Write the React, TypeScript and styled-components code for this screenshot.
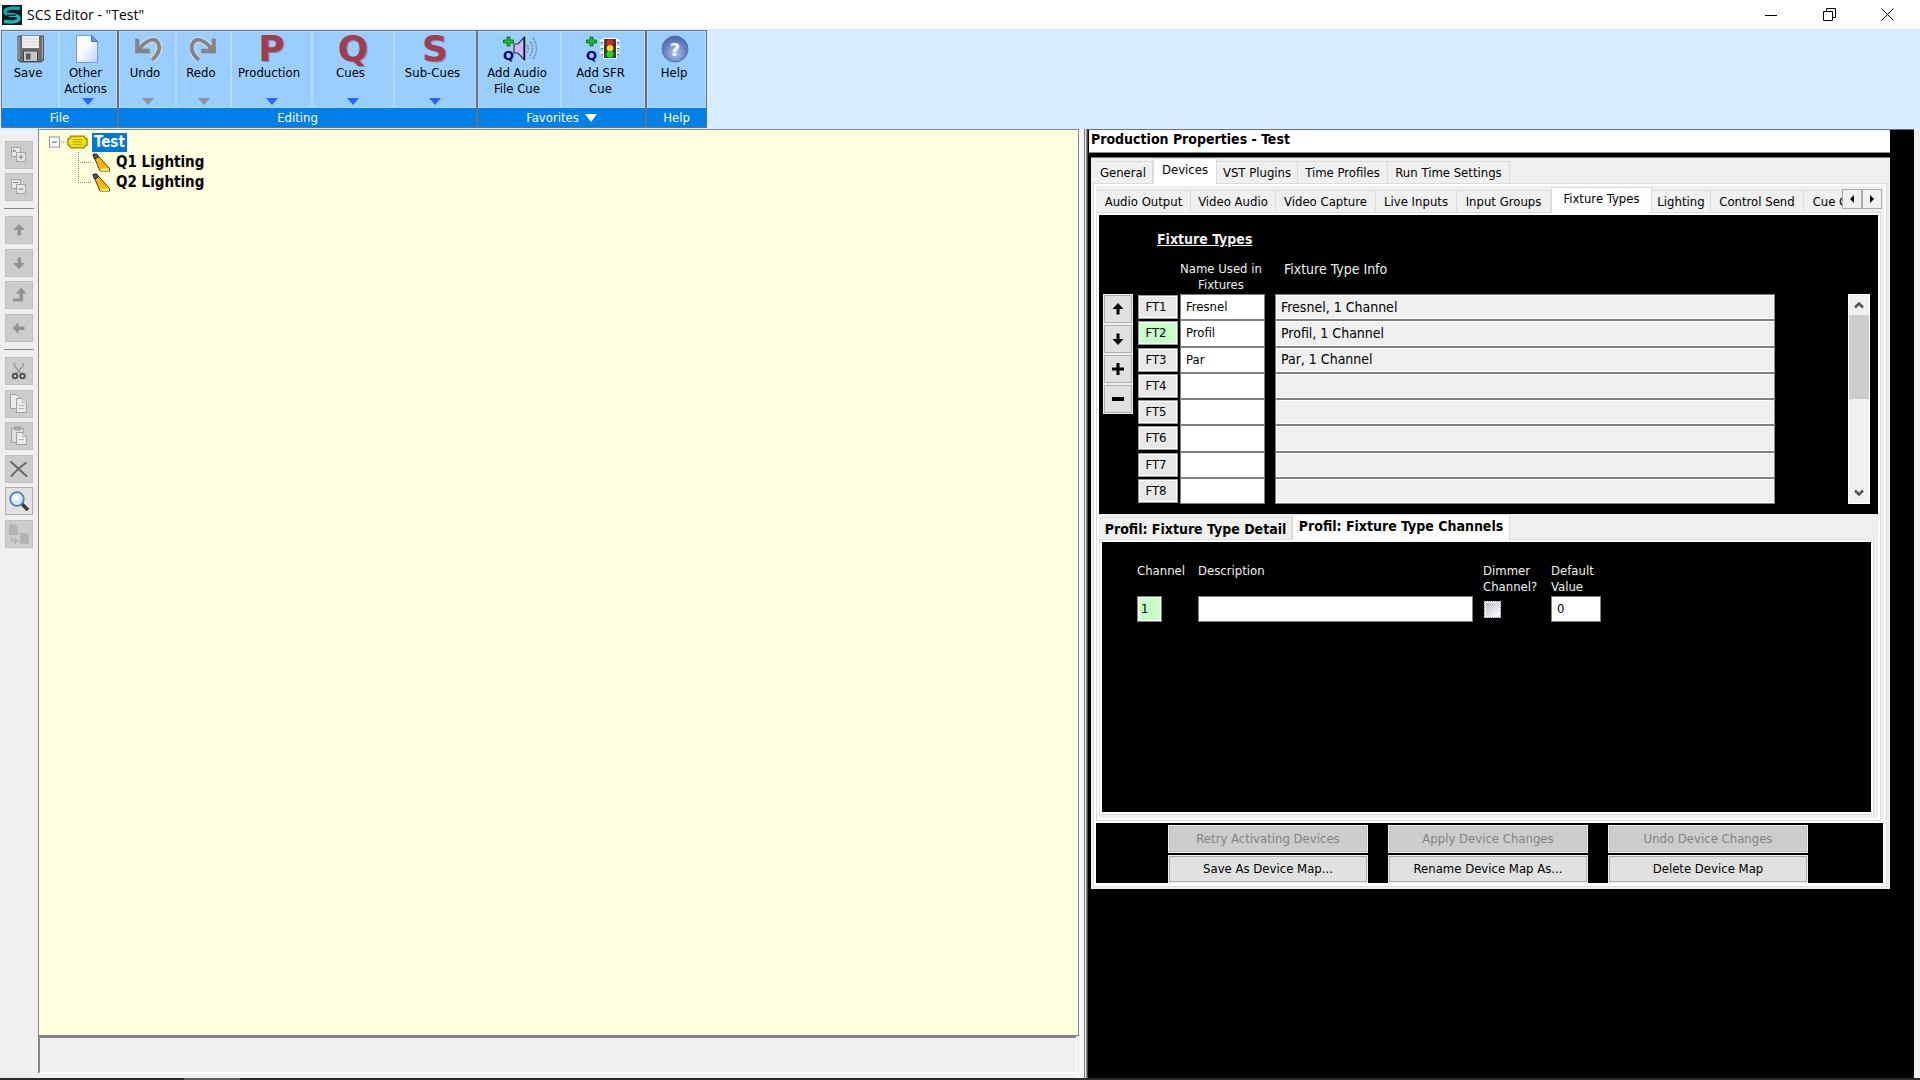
import React from 'react';
import styled, { createGlobalStyle, css } from 'styled-components';

const UI_FONT = '"DejaVu Sans Condensed", "DejaVu Sans", "Liberation Sans", sans-serif';

const GlobalStyle = createGlobalStyle`
  * { box-sizing: border-box; }
  body { margin: 0; background: #f0f0f0; }
  button, input { font: inherit; color: inherit; }
`;

/* ---------- window ---------- */

const Window = styled.div`
  display: flex;
  flex-direction: column;
  height: 100vh;
  overflow: hidden;
  background: #efefef;
  color: #000;
  font: 13px/16px ${UI_FONT};
`;

const TitleBar = styled.header`
  display: flex;
  align-items: center;
  height: 29px;
  padding: 0 4px 0 2px;
  background: #fff;
`;

const WindowTitle = styled.h1`
  flex: 1;
  margin: 0 0 0 5px;
  font: 14px/20px "Open Sans", "Noto Sans", sans-serif;
`;

const CaptionButton = styled.button`
  display: grid;
  place-items: center;
  width: 58px;
  height: 28px;
  padding: 0;
  border: 0;
  background: none;
`;

const TaskbarEdge = styled.div`
  flex: none;
  height: 2px;
  padding-left: 184px;
  background: #2b2b30;
`;

const TaskbarItem = styled.div`
  width: 56px;
  height: 2px;
  background: #606064;
`;

/* ---------- ribbon ---------- */

const Ribbon = styled.nav`
  display: flex;
  flex: none;
  height: 100px;
  padding: 1px 1px;
  background: #d8ecff;
`;

const RibbonGroup = styled.section`
  display: flex;
  flex-direction: column;
  border: 1px solid #66727f;
  background: #99ceff;
`;

const RibbonButtons = styled.div`
  display: flex;
  flex: 1;
`;

const RibbonButton = styled.button<{ $width: number }>`
  display: flex;
  flex-direction: column;
  align-items: center;
  justify-content: flex-start;
  width: ${(p) => p.$width}px;
  padding: 3px 0 2px;
  border: 1px solid #b4dbff;
  background: none;
`;

const RibbonLabel = styled.span`
  padding-right: 5px;
  white-space: pre-line;
  text-align: center;
`;

const RibbonIcon = styled.span`
  display: grid;
  place-items: center;
  height: 28px;
  margin-bottom: 2px;
`;

const Letter = styled.span`
  color: #a23c4e;
  font: bold 36px/28px "DejaVu Sans", sans-serif;
  text-shadow: 1px 1px 1px #7f8fb0;
`;

const DropArrow = styled.span<{ $color: string }>`
  margin-top: auto;
  border: 6px solid transparent;
  border-top: 7px solid ${(p) => p.$color};
  border-bottom: 0;
`;

const GroupCaption = styled.div`
  display: flex;
  align-items: center;
  justify-content: center;
  gap: 6px;
  height: 19px;
  background: #0080e9;
  color: #fff;
`;

/* ---------- work area ---------- */

const WorkArea = styled.main`
  display: grid;
  grid-template-columns: 38px minmax(0, 1041fr) 9px minmax(0, 826fr) 6px;
  flex: 1;
  min-height: 0;
`;

const SideBar = styled.aside`
  display: flex;
  flex-direction: column;
  padding: 12px 4px 0;
`;

const ToolGroup = styled.div<{ $height: number }>`
  display: flex;
  flex-direction: column;
  justify-content: space-between;
  align-items: center;
  height: ${(p) => p.$height}px;
`;

const ToolRule = styled.hr`
  width: 100%;
  height: 1px;
  margin: 7px 0;
  border: 0;
  background: #8a8a8a;
`;

const ToolButton = styled.button<{ $enabled?: boolean }>`
  display: grid;
  place-items: center;
  width: 28px;
  height: 28px;
  padding: 0;
  border: 1px solid ${(p) => (p.$enabled ? '#adadad' : '#bfbfbf')};
  background: ${(p) => (p.$enabled ? '#e1e1e1' : '#cccccc')};
`;

const LeftColumn = styled.div`
  display: flex;
  flex-direction: column;
  padding-bottom: 4px;
`;

const TreePane = styled.div`
  flex: 1;
  padding: 2px 9px;
  border: 1px solid #828790;
  background: #ffffe0;
  font: bold 15px/19px ${UI_FONT};
`;

const TreeRow = styled.div<{ $child?: boolean }>`
  display: flex;
  align-items: center;
  height: 20px;
  padding-left: ${(p) => (p.$child ? 30 : 1)}px;
`;

const TreeLabel = styled.span<{ $selected?: boolean }>`
  padding: 0 2px;
  ${(p) => p.$selected && css`background: #0078d7; color: #fff;`}
`;

const TreeIcon = styled.span`
  display: flex;
  margin-right: 4px;
`;

const StatusPane = styled.div`
  height: 38px;
  margin-right: 2px;
  border: 2px solid #858585;
  border-right-color: #f8f8f8;
  border-bottom-color: #fff;
  background: #efefef;
`;

const Splitter = styled.div`
  border-right: 1px solid #444;
  background: linear-gradient(90deg, #f7f7f7 0 5px, #777 5px 6px, #eee 6px 7px, #888 7px);
`;

const RightPane = styled.section`
  padding: 0 24px 0 1px;
  border-top: 1px solid #6f6f6f;
  background: #000;
`;

const PaneTitle = styled.h2`
  height: 23px;
  margin: 0 0 4px;
  padding: 0 2px;
  border-bottom: 1px solid #888;
  background: #fff;
  font: bold 14px/18px ${UI_FONT};
`;

/* ---------- tabs ---------- */

const DeviceTabs = styled.div`
  margin-left: 2px;
  padding: 0 3px 2px 2px;
  border-top: 1px solid #777;
  background: #efefef;
`;

const TabStrip = styled.div<{ $bold?: boolean }>`
  display: flex;
  align-items: flex-end;
  flex: 1;
  min-width: 0;
  height: 25px;
  padding-left: 1px;
  overflow-x: clip;
  ${(p) => p.$bold && css`font-size: 14px; font-weight: bold;`}
`;

const Tab = styled.button<{ $width: number; $active?: boolean }>`
  flex: none;
  width: ${(p) => p.$width}px;
  height: ${(p) => (p.$active ? 26 : 22)}px;
  margin-bottom: ${(p) => (p.$active ? -1 : 0)}px;
  padding: 0 0 ${(p) => (p.$active ? 3 : 0)}px;
  border: 1px solid #dcdcdc;
  border-bottom: 0;
  border-left-width: ${(p) => (p.$active ? 1 : 0)}px;
  background: ${(p) => (p.$active ? '#fff' : '#f0f0f0')};
  white-space: nowrap;
`;

const TabPage = styled.div`
  padding: 2px;
  border: 1px solid #dcdcdc;
  background: #fff;
`;

const InnerTabs = styled.div`
  padding-right: 3px;
  background: #efefef;
`;

const InnerStripRow = styled.div`
  display: flex;
  height: 26px;
  padding-top: 1px;
`;

const TabScroller = styled.div`
  display: flex;
  height: 20px;
  margin: 2px -1px 0 0;
`;

const ScrollTabButton = styled.button`
  display: grid;
  place-items: center;
  width: 20px;
  padding: 0;
  border: 1px solid #acacac;
  background: #f0f0f0;
`;

const DetailTabs = styled.div`
  padding: 0 4px 3px 0;
  background: #efefef;
`;

/* ---------- fixture types ---------- */

const FixtureSection = styled.section`
  height: 299px;
  padding: 16px 8px 0 4px;
  background: #000;
  color: #f0f0f0;
`;

const SectionTitle = styled.h3`
  margin: 0 0 13px 54px;
  font: bold 14px/16px ${UI_FONT};
  text-decoration: underline;
`;

const FixtureBody = styled.div`
  display: flex;
  align-items: flex-start;
`;

const MoveButtons = styled.div`
  display: flex;
  flex-direction: column;
  margin: 34px 5px 0 0;
  border: 1px solid #f0f0f0;
  background: #f0f0f0;
`;

const MoveButton = styled.button`
  display: grid;
  place-items: center;
  width: 28px;
  height: 28px;
  margin-bottom: 2px;
  padding: 0;
  border: 1px solid #adadad;
  background: #e1e1e1;
  color: #000;

  &:last-child { margin-bottom: 0; }
`;

const Table = styled.table<{ $height?: number }>`
  border-collapse: collapse;
  table-layout: fixed;
  ${(p) => p.$height && css`height: ${p.$height}px;`}

  thead tr { height: 34px; }
  td { padding: 0; height: 26px; }
`;

const HeadCell = styled.th<{ $width: number; $center?: boolean; $large?: boolean }>`
  width: ${(p) => p.$width}px;
  height: 34px;
  padding: 1px ${(p) => (p.$center ? 13 : 0)}px 1px 0;
  font-size: ${(p) => (p.$large ? 14 : 13)}px;
  font-weight: normal;
  text-align: ${(p) => (p.$center ? 'center' : 'left')};
  vertical-align: top;
  white-space: pre;
`;

const InfoHead = styled(HeadCell)`
  padding-left: 9px;
`;

const RowButton = styled.button<{ $current?: boolean }>`
  display: block;
  width: 40px;
  height: 24px;
  padding: 0 4px 0 0;
  border: 1px solid #999;
  box-shadow: inset 0 0 0 1px #fff;
  background: ${(p) => (p.$current ? '#c8ffc8' : '#e8e8e8')};
  color: #000;
`;

const Field = styled.input<{ $width: number; $look?: 'plain' | 'info' | 'current' }>`
  display: block;
  width: ${(p) => p.$width}px;
  height: 100%;
  min-height: 26px;
  padding: 0 5px 1px;
  border: 1px solid #808080;
  border-radius: 0;
  box-shadow: inset 0 0 0 1px #fff;
  background: ${(p) => (p.$look === 'info' ? '#efefef' : p.$look === 'current' ? '#c8ffc8' : '#fff')};
  color: #000;
  font-size: ${(p) => (p.$look === 'info' ? 14 : 13)}px;
  outline: 0;
`;

const NumberCell = styled(Field)`
  padding: 0 0 1px 3px;
`;

const ScrollBar = styled.div`
  display: flex;
  flex-direction: column;
  width: 22px;
  height: 210px;
  margin: 34px 0 0 auto;
  border: 1px solid #fff;
  background: #f0f0f0;
`;

const ScrollButton = styled.button`
  display: grid;
  place-items: center;
  height: 20px;
  padding: 0;
  border: 0;
  background: none;
`;

const ScrollThumb = styled.div`
  height: 84px;
  margin-bottom: auto;
  background: #cdcdcd;
`;

/* ---------- channels ---------- */

const ChannelSection = styled.section`
  height: 270px;
  padding: 20px 0 0 35px;
  background: #000;
  color: #f0f0f0;
`;

const DimmerBox = styled.input`
  appearance: none;
  display: block;
  width: 17px;
  height: 17px;
  margin: 0 0 0 1px;
  border: 2px solid #f0f0f0;
  outline: 1px dotted #888;
  outline-offset: -1px;
  background: linear-gradient(135deg, #b8bcc4, #fff);
`;

/* ---------- device map actions ---------- */

const ActionBar = styled.div`
  display: grid;
  grid-template-columns: repeat(3, 200px);
  grid-auto-rows: 28px;
  justify-content: center;
  gap: 2px 20px;
  margin: 2px 1px 1px 0;
  padding: 2px 3px 0 0;
  background: #000;
`;

const ActionButton = styled.button`
  padding: 0;
  border: 1px solid #adadad;
  outline: 1px solid #f0f0f0;
  outline-offset: -1px;
  box-shadow: inset 0 0 0 1px #adadad;
  background: #e1e1e1;

  &:disabled {
    background: #cccccc;
    box-shadow: inset 0 0 0 1px #bfbfbf;
    color: #838383;
  }
`;

/* ---------- drawings ---------- */

const AppLogo = () => (
  <svg width="20" height="20" viewBox="0 0 20 20" aria-hidden="true">
    <rect width="20" height="20" fill="#0b1a1e" />
    <path d="M18 3.500C11 2.500 3 3 3 6.500 3 10 9 10 13 9.500" fill="none" stroke="#19a5a8" strokeWidth="3.400" />
    <path d="M2 16.500c7 1 15 .5 15-3 0-3.500-6-3.500-10-3" fill="none" stroke="#1fb3b4" strokeWidth="3.400" />
    <path d="M5 10.200h9" stroke="#0b1a1e" strokeWidth="1.200" />
  </svg>
);

const SaveIcon = () => (
  <svg width="28" height="28" viewBox="0 0 28 28" aria-hidden="true">
    <path d="M1 1h25.500v24l-2 2H3l-2-2z" fill="#6d6d6d" stroke="#555" />
    <path d="M5 1h17v12H5z" fill="#f0f0f0" />
    <path d="M5 4h17M5 7h17M5 10h17" stroke="#d8d8d8" />
    <path d="M2 2v22M25.500 2v22" stroke="#aaa" />
    <path d="M6.500 16h14v10.500h-14z" fill="#c6c6c6" stroke="#444" />
    <path d="M9 18.500h4.500v6H9z" fill="#555" />
  </svg>
);

const PageIcon = () => (
  <svg width="24" height="28" viewBox="0 0 24 28" aria-hidden="true">
    <defs>
      <linearGradient id="page" x1="0" y1="0" x2="1" y2="1">
        <stop offset="0" stopColor="#fff" />
        <stop offset=".5" stopColor="#f4f8ff" />
        <stop offset="1" stopColor="#b9d0fb" />
      </linearGradient>
    </defs>
    <path d="M.5.5h15l6 6v21H.5z" fill="url(#page)" stroke="#7f95d8" />
    <path d="M15.500.5v6h6z" fill="#7394e0" stroke="#4a66c4" />
  </svg>
);

const UndoIcon = ({ flip }: { flip?: boolean }) => (
  <svg width="28" height="26" viewBox="0 0 28 26" aria-hidden="true">
    <g transform={flip ? 'matrix(-1 0 0 1 27 0)' : undefined}>
      <path d="M18 24c7-6 8-12 6.500-16C22 2 15 2 7 11" fill="none" stroke="#dfe6ee" strokeWidth="6" />
      <path d="M18 24c7-6 8-12 6.500-16C22 2 15 2 7 11" fill="none" stroke="#858585" strokeWidth="4" />
      <path d="M1.500 3v14h14v-4H9L5 9V3z" fill="#858585" stroke="#777" strokeWidth=".5" />
    </g>
  </svg>
);

const AddQ = () => (
  <g>
    <path d="M4 2h3v3h3.500v3H7v3H4V8H.5V5H4z" fill="#19c219" stroke="#075f07" strokeWidth=".8" />
    <text x="0" y="25" fontFamily="DejaVu Sans, sans-serif" fontWeight="bold" fontSize="13" fill="#00007b">Q</text>
  </g>
);

const AudioCueIcon = () => (
  <svg width="34" height="28" viewBox="0 0 34 28" aria-hidden="true">
    <AddQ />
    <path d="M11 9h4l6-6.500v22L15 18h-4z" fill="#c9b8f2" stroke="#33305a" strokeWidth="1.200" />
    <path d="M21.500 2v23" stroke="#111" strokeWidth="1.500" />
    <path d="M24 10q2.500 4 0 7.500M27 6.500q5 7 0 14.500M30 3q7 10.500 0 21" fill="none" stroke="#7d93a8" strokeWidth="1.600" strokeDasharray="2.500 .8" />
  </svg>
);

const SfrCueIcon = () => (
  <svg width="34" height="28" viewBox="0 0 34 28" aria-hidden="true">
    <AddQ />
    <path d="M14 6h20M14 12h20M14 18h20" stroke="#f4f4f4" strokeWidth="3" />
    <path d="M15 7.500h18M15 13.500h18M15 19.500h18" stroke="#444" strokeWidth=".8" />
    <path d="M17.500 3.500h13v20h-13z" fill="#3c3c3c" stroke="#fff" />
    <circle cx="24" cy="7.500" r="3.200" fill="#f21a1a" />
    <circle cx="24" cy="13.300" r="3.200" fill="#f6e21c" />
    <circle cx="24" cy="19.300" r="3.500" fill="#14dc22" />
  </svg>
);

const HelpIcon = () => (
  <svg width="32" height="28" viewBox="0 0 32 28" aria-hidden="true">
    <defs>
      <radialGradient id="help" cx=".5" cy=".65" r=".6">
        <stop offset="0" stopColor="#b5c8ea" />
        <stop offset=".6" stopColor="#6d88c6" />
        <stop offset="1" stopColor="#4f69ad" />
      </radialGradient>
    </defs>
    <circle cx="14" cy="14" r="13" fill="url(#help)" stroke="#5d74b4" />
    <text x="14" y="21" textAnchor="middle" fontFamily="DejaVu Sans, sans-serif" fontWeight="bold" fontSize="18" fill="#fff">?</text>
  </svg>
);

const glyphs: Record<string, React.ReactNode> = {
  expand: (
    <g fill="#e6e6e6" stroke="#a2a2a2">
      <path d="M2.500 2.500h9v9h-9z" />
      <path d="M7.500 7.500h9v9h-9z" />
      <path d="M5 7V4.500M3.500 6H7M12 9.500v5M9.500 12h5" stroke="#888" fill="none" />
    </g>
  ),
  collapse: (
    <g fill="#e6e6e6" stroke="#a2a2a2">
      <path d="M2.500 2.500h9v9h-9z" />
      <path d="M7.500 7.500h9v9h-9z" />
      <path d="M4 5.500h5M9.500 12h5" stroke="#888" fill="none" />
    </g>
  ),
  up: <path d="M10 4l6 6h-4v5.500H8.500V10H4z" fill="#929292" />,
  down: <path d="M10 16l6-6h-4V4.500H8.500V10H4z" fill="#929292" />,
  promote: <path d="M12 2.500l5.500 6H14v8H4v-3h6.500v-5H7z" fill="#929292" />,
  left: <path d="M3.500 10l6-5.500v4h6V12h-6v4z" fill="#929292" />,
  cut: (
    <g fill="none" stroke="#777" strokeWidth="2">
      <path d="M5.500 2v3l7 8M14 2v3l-7 8" stroke="#999" strokeWidth="1.500" />
      <circle cx="6" cy="15" r="2.300" stroke="#555" />
      <circle cx="13.500" cy="15" r="2.300" stroke="#555" />
    </g>
  ),
  copy: (
    <g fill="#ebebeb" stroke="#a0a0a0">
      <path d="M1.500.5h6l3 3v11h-9z" />
      <path d="M7.500 4.500h6l4 4v10h-10z" />
      <path d="M13.500 4.500v4h4M9.500 11.500h6M9.500 14.500h6" stroke="#b5b5b5" />
    </g>
  ),
  paste: (
    <g fill="#dedede" stroke="#a0a0a0">
      <path d="M2.500 2.500h12v14h-12z" />
      <path d="M5.500 1h6v3h-6z" fill="#aaa" />
      <path d="M7.500 6.500h6l4 4v8h-10z" fill="#ebebeb" />
      <path d="M13.500 6.500v4h4M9.500 13.500h6" stroke="#b5b5b5" />
    </g>
  ),
  remove: <path d="M1.500 2.500 18 17.500M17.500 3.500C12 7 7 12 2 17.500" stroke="#686868" strokeWidth="2" fill="none" />,
  find: (
    <g>
      <path d="M13 13l6 6" stroke="#3a3a3a" strokeWidth="3.500" />
      <circle cx="8" cy="8" r="6.800" fill="#d9e9ff" stroke="#5d7fb0" strokeWidth="1.800" />
      <circle cx="7" cy="6.500" r="3" fill="#fff" />
    </g>
  ),
  replace: (
    <g fill="#b3b3b3">
      <path d="M0 0h6l3 3v8H0z" />
      <path d="M11 9h6l3 3v8h-9z" />
      <path d="M2.500 13v4h5M5.500 14.500 8 17l-2.500 2.500" fill="none" stroke="#b3b3b3" strokeWidth="1.500" />
    </g>
  ),
};

const ToolGlyph = ({ name }: { name: string }) => (
  <svg width="20" height="20" viewBox="0 0 20 20" aria-hidden="true">{glyphs[name]}</svg>
);

const CueListIcon = () => (
  <svg width="21" height="14" viewBox="0 0 22 14" aria-hidden="true">
    <path d="M4 .8h14l1 2.200 2 .8v6.400l-2 .8-1 2.200H4L3 11l-2-.8V3.800L3 3z" fill="#f2e600" stroke="#a87410" strokeWidth="1.400" />
    <path d="M6 4.500h10M6 7h10M6 9.500h10" stroke="#a59b00" />
  </svg>
);

const LampIcon = () => (
  <svg width="18" height="19" viewBox="0 0 18 19" aria-hidden="true">
    <path d="M1 1.500 4.500 1l13 14.500v2.500H8z" fill="#ffb40a" stroke="#4c3b10" />
    <path d="M1 1.500 4.500 1l2 3L2.500 6z" fill="#45617c" stroke="#222" />
    <path d="M8 15.500h9v2.500H8.500z" fill="#ffe94a" />
  </svg>
);

const Expander = () => (
  <svg width="18" height="12" viewBox="0 0 18 12" aria-hidden="true">
    <rect x=".5" y="1" width="10" height="10" fill="#fff" stroke="#919191" />
    <path d="M3 6h5" stroke="#3a55a8" />
    <path d="M12 6h6" stroke="#888" strokeDasharray="1 1" />
  </svg>
);

const Branch = ({ last }: { last?: boolean }) => (
  <svg width="14" height="20" viewBox="0 0 14 20" aria-hidden="true">
    <path d={last ? 'M.5 0v10' : 'M.5 0v20'} stroke="#888" strokeDasharray="1 1" />
    <path d="M0 10.500h14" stroke="#888" strokeDasharray="1 1" />
  </svg>
);

const Glyph = ({ d, size = 12, color = '#000' }: { d: string; size?: number; color?: string }) => (
  <svg width={size} height={size} viewBox="0 0 12 12" aria-hidden="true">
    <path d={d} fill={color} />
  </svg>
);

const Chevron = ({ d }: { d: string }) => (
  <svg width="10" height="8" viewBox="0 0 10 8" aria-hidden="true">
    <path d={d} fill="none" stroke="#555" strokeWidth="2.500" />
  </svg>
);

/* ---------- data ---------- */

type RibbonItem = { label: string; width: number; icon: React.ReactNode; arrow?: string };
const BLUE = '#2a63ff';
const GREY = '#949494';

const ribbon: { caption: string; menu?: boolean; items: RibbonItem[] }[] = [
  {
    caption: 'File',
    items: [
      { label: 'Save', width: 57, icon: <SaveIcon /> },
      { label: 'Other\nActions', width: 58, icon: <PageIcon />, arrow: BLUE },
    ],
  },
  {
    caption: 'Editing',
    items: [
      { label: 'Undo', width: 57, icon: <UndoIcon />, arrow: GREY },
      { label: 'Redo', width: 55, icon: <UndoIcon flip />, arrow: GREY },
      { label: 'Production', width: 81, icon: <Letter>P</Letter>, arrow: BLUE },
      { label: 'Cues', width: 82, icon: <Letter>Q</Letter>, arrow: BLUE },
      { label: 'Sub-Cues', width: 82, icon: <Letter>S</Letter>, arrow: BLUE },
    ],
  },
  {
    caption: 'Favorites',
    menu: true,
    items: [
      { label: 'Add Audio\nFile Cue', width: 83, icon: <AudioCueIcon /> },
      { label: 'Add SFR\nCue', width: 84, icon: <SfrCueIcon /> },
    ],
  },
  { caption: 'Help', items: [{ label: 'Help', width: 59, icon: <HelpIcon /> }] },
];

const toolGroups = [
  { height: 60, tools: ['expand', 'collapse'] },
  { height: 126, tools: ['up', 'down', 'promote', 'left'] },
  { height: 191, tools: ['cut', 'copy', 'paste', 'remove', 'find', 'replace'] },
];

type TabItem = { label: string; width: number; active?: boolean };

const mainTabs: TabItem[] = [
  { label: 'General', width: 59 },
  { label: 'Devices', width: 64, active: true },
  { label: 'VST Plugins', width: 81 },
  { label: 'Time Profiles', width: 90 },
  { label: 'Run Time Settings', width: 122 },
];

const deviceTabs: TabItem[] = [
  { label: 'Audio Output', width: 94 },
  { label: 'Video Audio', width: 85 },
  { label: 'Video Capture', width: 100 },
  { label: 'Live Inputs', width: 81 },
  { label: 'Input Groups', width: 94 },
  { label: 'Fixture Types', width: 101, active: true },
  { label: 'Lighting', width: 59 },
  { label: 'Control Send', width: 93 },
  { label: 'Cue Control', width: 87 },
];

const detailTabs: TabItem[] = [
  { label: 'Profil: Fixture Type Detail', width: 192 },
  { label: 'Profil: Fixture Type Channels', width: 218, active: true },
];

const fixtures = [
  { id: 'FT1', name: 'Fresnel', info: 'Fresnel, 1 Channel' },
  { id: 'FT2', name: 'Profil', info: 'Profil, 1 Channel' },
  { id: 'FT3', name: 'Par', info: 'Par, 1 Channel' },
  { id: 'FT4', name: '', info: '' },
  { id: 'FT5', name: '', info: '' },
  { id: 'FT6', name: '', info: '' },
  { id: 'FT7', name: '', info: '' },
  { id: 'FT8', name: '', info: '' },
];

const moves = [
  { label: 'Move up', d: 'M6 0l5.500 6H7.500v5.500h-3V6H.5z' },
  { label: 'Move down', d: 'M6 12l5.500-6H7.500V.5h-3V6H.5z' },
  { label: 'Add', d: 'M4.500 0h3v4.500H12v3H7.500V12h-3V7.500H0v-3h4.500z' },
  { label: 'Remove', d: 'M0 4h12v4H0z' },
];

const Tabs = ({ items, bold }: { items: TabItem[]; bold?: boolean }) => (
  <TabStrip role="tablist" $bold={bold}>
    {items.map((t) => (
      <Tab key={t.label} role="tab" aria-selected={!!t.active} $width={t.width} $active={t.active}>
        {t.label}
      </Tab>
    ))}
  </TabStrip>
);

export default function App() {
  return (
    <Window>
      <GlobalStyle />
      <TitleBar>
        <AppLogo />
        <WindowTitle>SCS Editor - "Test"</WindowTitle>
        <CaptionButton aria-label="Minimize">
          <svg width="12" height="12"><path d="M0 6.500h12" stroke="#000" /></svg>
        </CaptionButton>
        <CaptionButton aria-label="Restore">
          <svg width="13" height="13" fill="none" stroke="#000">
            <path d="M.5 3.500h9v9h-9zM3.500 3V.5h9v9H10" />
          </svg>
        </CaptionButton>
        <CaptionButton aria-label="Close">
          <svg width="13" height="13"><path d="M.5.5l12 12M12.500.5l-12 12" stroke="#000" /></svg>
        </CaptionButton>
      </TitleBar>

      <Ribbon>
        {ribbon.map((g) => (
          <RibbonGroup key={g.caption}>
            <RibbonButtons>
              {g.items.map((b) => (
                <RibbonButton key={b.label} $width={b.width}>
                  <RibbonIcon>{b.icon}</RibbonIcon>
                  <RibbonLabel>{b.label}</RibbonLabel>
                  {b.arrow && <DropArrow $color={b.arrow} />}
                </RibbonButton>
              ))}
            </RibbonButtons>
            <GroupCaption>
              {g.caption}
              {g.menu && <Glyph d="M0 2h12L6 10z" color="#fff" />}
            </GroupCaption>
          </RibbonGroup>
        ))}
      </Ribbon>

      <WorkArea>
        <SideBar>
          {toolGroups.map((g, i) => (
            <React.Fragment key={g.height}>
              {i > 0 && <ToolRule />}
              <ToolGroup $height={g.height}>
                {g.tools.map((t) => (
                  <ToolButton key={t} aria-label={t} disabled={t !== 'find'} $enabled={t === 'find'}>
                    <ToolGlyph name={t} />
                  </ToolButton>
                ))}
              </ToolGroup>
            </React.Fragment>
          ))}
        </SideBar>

        <LeftColumn>
          <TreePane>
            <TreeRow>
              <Expander />
              <TreeIcon><CueListIcon /></TreeIcon>
              <TreeLabel $selected>Test</TreeLabel>
            </TreeRow>
            {['Q1 Lighting', 'Q2 Lighting'].map((q, i) => (
              <TreeRow key={q} $child>
                <Branch last={i === 1} />
                <TreeIcon><LampIcon /></TreeIcon>
                <TreeLabel>{q}</TreeLabel>
              </TreeRow>
            ))}
          </TreePane>
          <StatusPane />
        </LeftColumn>

        <Splitter />

        <RightPane>
          <PaneTitle>Production Properties - Test</PaneTitle>
          <DeviceTabs>
            <Tabs items={mainTabs} />
            <TabPage>
              <InnerTabs>
                <InnerStripRow>
                  <Tabs items={deviceTabs} />
                  <TabScroller>
                    <ScrollTabButton aria-label="Previous tabs"><Glyph d="M8 2v8L4 6z" /></ScrollTabButton>
                    <ScrollTabButton aria-label="Next tabs"><Glyph d="M4 2v8l4-4z" /></ScrollTabButton>
                  </TabScroller>
                </InnerStripRow>
                <TabPage>
                  <FixtureSection>
                    <SectionTitle>Fixture Types</SectionTitle>
                    <FixtureBody>
                      <MoveButtons>
                        {moves.map((m) => (
                          <MoveButton key={m.label} aria-label={m.label}><Glyph d={m.d} /></MoveButton>
                        ))}
                      </MoveButtons>
                      <Table $height={244}>
                        <thead>
                          <tr>
                            <HeadCell $width={42} />
                            <HeadCell $width={95} $center>{'Name Used in\nFixtures'}</HeadCell>
                            <InfoHead $width={500} $large>Fixture Type Info</InfoHead>
                          </tr>
                        </thead>
                        <tbody>
                          {fixtures.map((f) => (
                            <tr key={f.id}>
                              <td><RowButton $current={f.id === 'FT2'}>{f.id}</RowButton></td>
                              <td><Field $width={85} aria-label={`${f.id} name`} defaultValue={f.name} /></td>
                              <td><Field $width={500} $look="info" aria-label={`${f.id} info`} readOnly value={f.info} /></td>
                            </tr>
                          ))}
                        </tbody>
                      </Table>
                      <ScrollBar>
                        <ScrollButton aria-label="Scroll up"><Chevron d="M1 6.500l4-4 4 4" /></ScrollButton>
                        <ScrollThumb />
                        <ScrollButton aria-label="Scroll down"><Chevron d="M1 1.500l4 4 4-4" /></ScrollButton>
                      </ScrollBar>
                    </FixtureBody>
                  </FixtureSection>

                  <DetailTabs>
                    <Tabs items={detailTabs} bold />
                    <TabPage>
                      <ChannelSection>
                        <Table>
                          <thead>
                            <tr>
                              <HeadCell $width={61}>Channel</HeadCell>
                              <HeadCell $width={285}>Description</HeadCell>
                              <HeadCell $width={68}>{'Dimmer\nChannel?'}</HeadCell>
                              <HeadCell $width={50}>{'Default\nValue'}</HeadCell>
                            </tr>
                          </thead>
                          <tbody>
                            <tr>
                              <td><NumberCell $width={25} $look="current" aria-label="Channel" readOnly value="1" /></td>
                              <td><Field $width={275} aria-label="Description" defaultValue="" /></td>
                              <td><DimmerBox type="checkbox" aria-label="Dimmer channel" /></td>
                              <td><Field $width={50} aria-label="Default value" defaultValue="0" /></td>
                            </tr>
                          </tbody>
                        </Table>
                      </ChannelSection>
                    </TabPage>
                  </DetailTabs>
                </TabPage>
              </InnerTabs>
              <ActionBar>
                <ActionButton disabled>Retry Activating Devices</ActionButton>
                <ActionButton disabled>Apply Device Changes</ActionButton>
                <ActionButton disabled>Undo Device Changes</ActionButton>
                <ActionButton>Save As Device Map...</ActionButton>
                <ActionButton>Rename Device Map As...</ActionButton>
                <ActionButton>Delete Device Map</ActionButton>
              </ActionBar>
            </TabPage>
          </DeviceTabs>
        </RightPane>
        <div />
      </WorkArea>
      <TaskbarEdge><TaskbarItem /></TaskbarEdge>
    </Window>
  );
}
